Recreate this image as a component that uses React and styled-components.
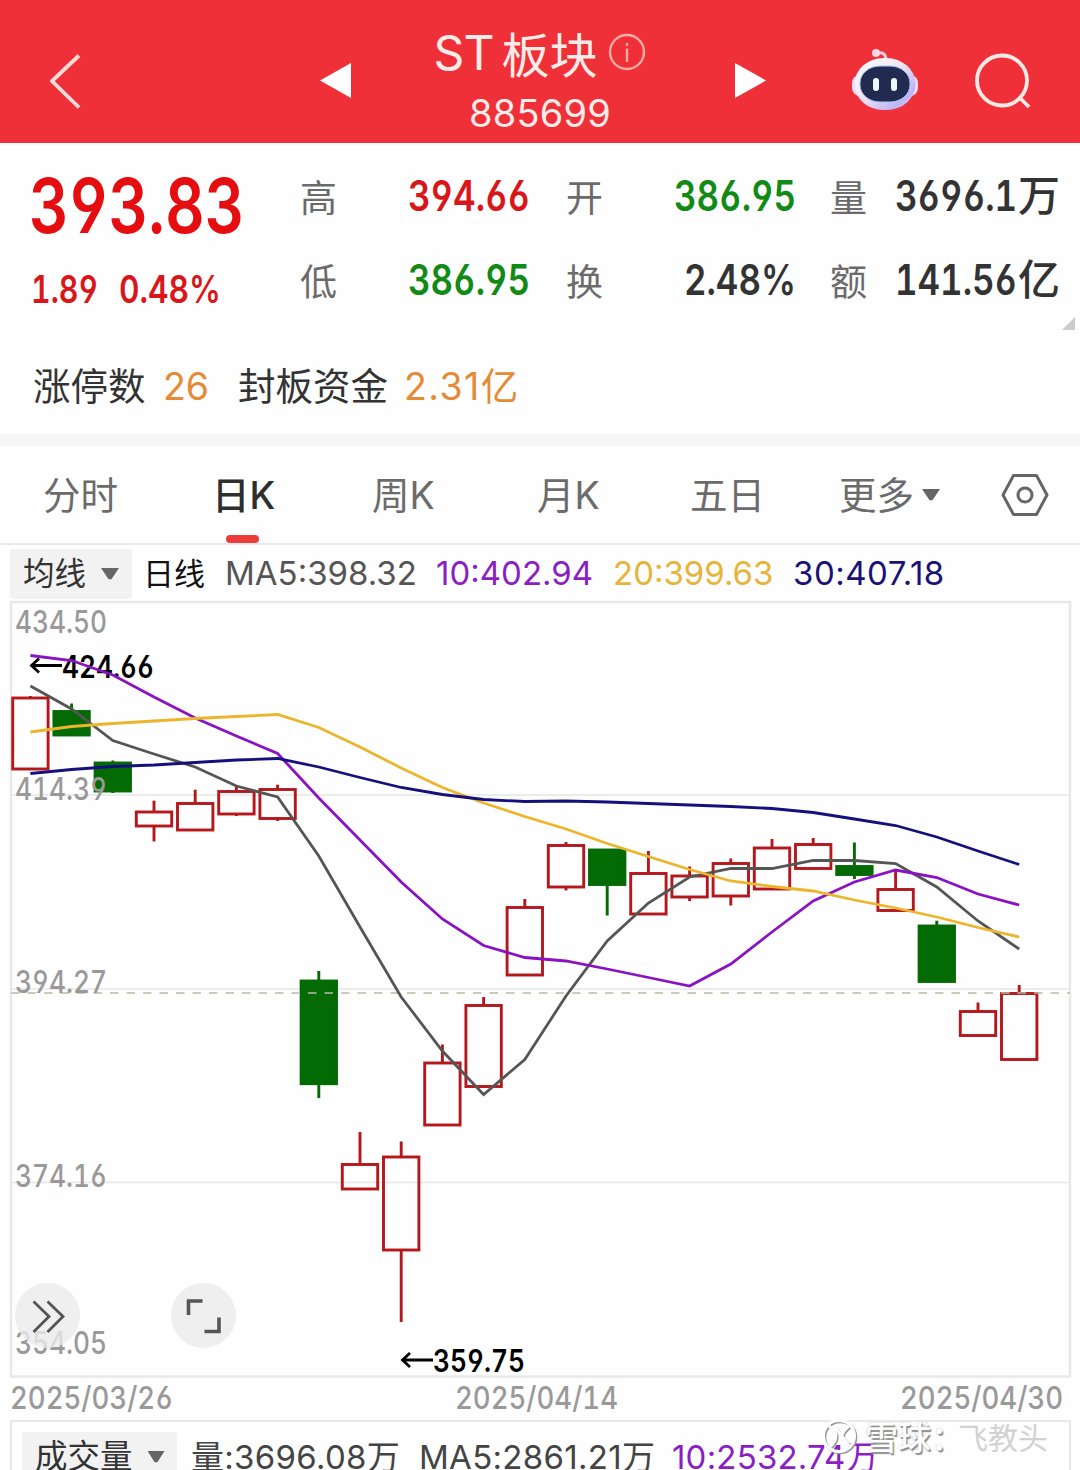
import styled, { createGlobalStyle } from 'styled-components';

const GlobalStyle = createGlobalStyle`
  * {
    box-sizing: border-box;
  }

  body {
    margin: 0;
    background: #fefefe;
    font-family: 'Inter', 'Noto Sans CJK SC', sans-serif;
    color: #333;
  }
`;

const Page = styled.div`
  position: relative;
  width: 1080px;
  height: 1470px;
  overflow: hidden;
  background: #fefefe;
  white-space: nowrap;
`;

/* Header */

const Header = styled.header`
  display: grid;
  grid-template-columns: 270px 101px 238px 192px 121px 1fr;
  height: 143px;
  padding-left: 50px;
  background: #ef3038;
`;

const BackIcon = styled.svg`
  width: 32px;
  height: 56px;
  margin-top: 54px;
`;

const StepIcon = styled.svg`
  width: 32px;
  height: 36px;
  margin-top: 63px;
  margin-left: ${(props) => props.$left || 0}px;
`;

const RobotIcon = styled.svg`
  width: 68px;
  height: 64px;
  margin-top: 48px;
`;

const SearchIcon = styled.svg`
  width: 60px;
  height: 60px;
  margin-top: 51px;
`;

const Heading = styled.div`
  display: flex;
  flex-direction: column;
  align-items: center;
  color: #ffece8;
`;

const Title = styled.h1`
  display: flex;
  align-items: center;
  height: 60px;
  margin: 22px 0 0;
  font-size: 48px;
  font-weight: 400;

  svg {
    margin-left: 11px;
  }
`;

const TitleLatin = styled.span`
  margin-right: 8px;
  letter-spacing: -1px;
`;

const Code = styled.div`
  height: 46px;
  margin-top: 8px;
  font-size: 38px;
  line-height: 46px;
  letter-spacing: 0.2px;
`;

/* Quote */

const Num = styled.span`
  display: inline-block;
  font-family: 'Inter', sans-serif;
  font-feature-settings: 'cv03', 'cv04', 'tnum';
  font-weight: ${(props) => props.$weight || 600};
  transform: scaleX(${(props) => props.$scale || 0.83});
  transform-origin: ${(props) => props.$origin || 'left'} center;
`;

const Quote = styled.section`
  display: grid;
  grid-template-columns: 271px 266px 264px 230px;
  height: 199px;
  padding: 13px 0 0 29px;
  position: relative;
`;

const PriceBlock = styled.div`
  color: #e60d10;
`;

const Price = styled.div`
  height: 100px;
  font-size: 75px;
  line-height: 100px;
`;

const Change = styled.div`
  display: flex;
  height: 66px;
  padding-left: 2px;
  font-size: 38px;
  line-height: 66px;
  color: #d9171b;
`;

const ChangeCell = styled.div`
  width: ${(props) => props.$width}px;
`;

const StatColumn = styled.div`
  display: flex;
  flex-direction: column;
  padding-right: ${(props) => props.$pad || 0}px;
`;

const Stat = styled.div`
  display: flex;
  justify-content: space-between;
  height: 83.5px;
  font-size: 42px;
  line-height: 79px;
  color: ${(props) => props.$color || '#333'};
`;

const StatLabel = styled.span`
  font-size: 37px;
  line-height: 85px;
  color: #6b6b6b;
`;

const StatValue = styled.span`
  display: flex;
  justify-content: flex-end;
`;

const Unit = styled.span`
  margin-left: 1px;
  font-family: 'Noto Sans CJK SC', sans-serif;
  font-size: 42px;
  line-height: 74px;
  font-weight: 500;
`;

const Corner = styled.span`
  position: absolute;
  right: 5px;
  bottom: 12px;
  width: 13px;
  height: 13px;
  background: #ccc;
  clip-path: polygon(100% 0, 100% 100%, 0 100%);
`;

const Limits = styled.section`
  display: flex;
  height: 92px;
  padding-left: 33px;
  font-size: 37.5px;
  line-height: 89px;
`;

const LimitCell = styled.span`
  width: ${(props) => props.$width}px;
  color: ${(props) => (props.$accent ? '#e68a35' : '#333')};
  letter-spacing: ${(props) => props.$spacing || 0}px;
`;

const Divider = styled.div`
  height: 12px;
  background: #f5f5f5;
`;

/* Tabs */

const Tabs = styled.nav`
  display: flex;
  height: 99px;
  padding-left: 43px;
  border-bottom: 2px solid #e6e9e9;
`;

const Tab = styled.div`
  display: flex;
  position: relative;
  width: ${(props) => props.$width}px;
  font-size: 37.5px;
  line-height: 99px;
  font-weight: ${(props) => (props.$active ? 500 : 400)};
  color: ${(props) => (props.$active ? '#2e2e2e' : '#6b6b6b')};
`;

const TabMark = styled.span`
  position: absolute;
  left: 14px;
  bottom: 0;
  width: 33px;
  height: 8px;
  border-radius: 4px;
  background: #ec3c39;
`;

const Caret = styled.span`
  width: ${(props) => props.$size || 18}px;
  height: 12px;
  margin: ${(props) => props.$margin || '0'};
  background: #666;
  clip-path: polygon(0 0, 100% 0, 58% 94%, 42% 94%);
`;

const Settings = styled.svg`
  width: 48px;
  height: 44px;
  margin-top: 27px;
`;

/* Indicator rows */

const Legend = styled.div`
  display: flex;
  height: 56px;
  padding: 4px 0 0 10px;
  font-size: 33px;
  line-height: 49px;
`;

const Picker = styled.div`
  display: flex;
  flex: none;
  align-items: center;
  width: ${(props) => props.$width}px;
  height: 50px;
  padding-left: 13px;
  border-radius: 3px;
  background: #f2f2f2;
  font-size: ${(props) => props.$size || 31.5}px;
  line-height: 50px;
`;

const LegendItem = styled.span`
  flex: none;
  width: ${(props) => props.$width}px;
  margin-left: ${(props) => props.$left || 0}px;
  color: ${(props) => props.$color};
  letter-spacing: ${(props) => props.$spacing || 0}px;
`;

const LegendName = styled.span`
  flex: none;
  width: 82px;
  margin-left: 11px;
  font-size: 31px;
  color: #111;
`;

/* Chart */

const ChartBox = styled.div`
  position: relative;
  height: 777px;
  margin: 0 9px 0 10px;
`;

const ChartSvg = styled.svg`
  display: block;
  width: 1061px;
  height: 777px;
  overflow: visible;

  text {
    font-family: 'Inter', sans-serif;
    font-feature-settings: 'cv03', 'cv04', 'tnum';
    font-size: 31px;
    font-weight: 500;
  }
`;

const MarkerText = styled.text`
  && {
    font-weight: 600;
  }
`;

const RoundButton = styled.div`
  position: absolute;
  left: ${(props) => props.$left}px;
  top: 682px;
  width: 65px;
  height: 65px;
  border-radius: 50%;
  background: rgba(235, 235, 235, 0.8);

  svg {
    display: block;
  }
`;

const Dates = styled.div`
  display: flex;
  justify-content: space-between;
  height: 42px;
  padding: 0 18px 0 10px;
  font-size: 31px;
  line-height: 40px;
  color: #999;
`;

const DateCell = styled.div`
  width: 162px;
`;

const Volume = styled.div`
  display: flex;
  height: 60px;
  margin: 0 9px 0 10px;
  padding: 10px 0 0 10px;
  border: 2px solid #e8e8e8;
  font-size: 33px;
  line-height: 50px;
`;

const Watermark = styled.div`
  position: absolute;
  left: 821px;
  top: 1412px;
  display: flex;
  align-items: center;
  height: 48px;
  font-size: 33px;
  font-weight: 500;
  color: #fff;
  text-shadow: 1.5px 1.5px 1px #909090, 0 0 2px #bbb;

  svg {
    margin-right: 7px;
  }
`;

const WatermarkAuthor = styled.span`
  margin-left: -6px;
  font-size: 30px;
  font-weight: 400;
  color: #d2d2d2;
  text-shadow: 1px 1px 1px #fff;
`;

const START = 30.4;
const STEP = 41.2;
const px = (i) => START + STEP * i;

// [high, body top, body bottom, low, falling]
const candles = [
  [696, 697, 770, 770],
  [703.5, 710.5, 736, 736, true],
  [760.5, 762, 792, 793, true],
  [800.7, 811, 827, 841.5],
  [789.7, 802.5, 831, 831],
  [786.7, 790.5, 815, 816],
  [784.7, 788.5, 819.5, 821],
  [971, 980, 1084.7, 1098, true],
  [1132, 1163.5, 1190, 1190],
  [1141.5, 1156, 1251, 1322],
  [1044.5, 1062, 1126, 1126],
  [997, 1004.5, 1087.5, 1088],
  [899, 906.5, 976, 976],
  [842, 844.5, 888, 890.5],
  [849, 849, 885.5, 915.5, true],
  [851, 872.5, 915, 915],
  [866.5, 875, 898, 901],
  [858.5, 862.5, 897, 905.5],
  [839, 847, 890, 890],
  [838, 843.5, 869.5, 870],
  [842.5, 865.5, 875.5, 879, true],
  [871, 888.5, 911.5, 912],
  [920.7, 925, 982.5, 982.5, true],
  [1002.5, 1010.5, 1036.5, 1037],
  [985, 992.5, 1060.5, 1061],
];

const averages = [
  {
    color: '#555',
    points: [686, 709, 740.5, 754, 767, 786, 797, 856, 927, 997, 1051, 1094.5, 1059.5, 996, 941, 903, 877, 868.5, 868.5, 860.5, 860.5, 863.5, 887, 921, 949],
  },
  {
    color: '#8a12c4',
    points: [655.5, 660.5, 675, 697, 718, 736, 753.5, 798, 840, 882, 919, 945.5, 957.5, 961, 969, 977.5, 986, 964, 932, 901, 882, 870, 877.5, 894, 905],
  },
  {
    color: '#edb52c',
    points: [732, 726.5, 723.5, 721, 718.5, 716.5, 714.5, 727.5, 747, 768, 787.5, 803, 816.5, 829, 843.5, 856.5, 869.5, 881, 886.5, 891, 900, 908, 917, 927.5, 937],
  },
  {
    color: '#14107c',
    points: [773.5, 769.5, 766.5, 765, 762.5, 760, 758.5, 767, 777.5, 787.5, 794.5, 799.5, 801.5, 801, 802, 803.5, 805, 806.5, 808.5, 812.5, 819, 825.5, 837, 851, 864.5],
  },
];

const scale = [
  ['434.50', 633],
  ['414.39', 799.5],
  ['394.27', 993],
  ['374.16', 1187],
  ['354.05', 1354],
];

const Candle = ({ x, data }) => {
  const [high, top, bottom, low, falling] = data;
  const color = falling ? '#046a04' : '#b4181c';
  return (
    <g stroke={color} strokeWidth="2.9" fill={falling ? color : 'none'}>
      {high < top && <line x1={x} x2={x} y1={high} y2={top} />}
      {low > bottom && <line x1={x} x2={x} y1={bottom} y2={low} />}
      <rect
        x={x - 17.7}
        y={top + 1}
        width="35.4"
        height={bottom - top - 2}
      />
    </g>
  );
};

const Marker = ({ x, y, value }) => (
  <g>
    <path
      d={`M${x + 32} ${y}H${x + 2}M${x + 9} ${y - 7}L${x + 1.5} ${y}L${x + 9} ${y + 7}`}
      fill="none"
      stroke="#000"
      strokeWidth="2.8"
    />
    <MarkerText x={x + 32} y={y + 12} textLength="92" lengthAdjust="spacingAndGlyphs">
      {value}
    </MarkerText>
  </g>
);

const Chart = () => (
  <ChartSvg viewBox="10 601 1061 777">
    <rect x="11" y="602" width="1059" height="774.5" fill="none" stroke="#e8e8e8" strokeWidth="2.4" />
    {[795, 989, 1182.5].map((y) => (
      <line key={y} x1="11" x2="1070" y1={y} y2={y} stroke="#e6e6e6" strokeWidth="1.5" />
    ))}
    {candles.map((data, i) => (
      <Candle key={i} x={px(i)} data={data} />
    ))}
    <line x1="11" x2="1070" y1="993" y2="993" stroke="#b9bba8" strokeWidth="1.6" strokeDasharray="8.5 8" />
    <g fill="#999">
      {scale.map(([label, y]) => (
        <text key={label} x="15" y={y} textLength="92" lengthAdjust="spacingAndGlyphs">
          {label}
        </text>
      ))}
    </g>
    <Marker x={30} y={665.5} value="424.66" />
    <Marker x={401} y={1360} value="359.75" />
    {averages.map(({ color, points }) => (
      <polyline
        key={color}
        points={points.map((y, i) => `${px(i)},${y}`).join(' ')}
        fill="none"
        stroke={color}
        strokeWidth="2.8"
      />
    ))}
  </ChartSvg>
);

const Robot = () => (
  <RobotIcon viewBox="851 48 68 64">
    <defs>
      <linearGradient id="shell" x1="0" y1="0" x2="1" y2="1">
        <stop offset="0" stopColor="#fff" />
        <stop offset="0.45" stopColor="#f1e4f4" />
        <stop offset="0.8" stopColor="#bdb4f6" />
        <stop offset="1" stopColor="#f3d9ee" />
      </linearGradient>
    </defs>
    <path d="M876 53Q886 51 886 60" fill="none" stroke="#fbd0de" strokeWidth="3" />
    <circle cx="876" cy="53" r="4" fill="#fcd9e2" />
    <rect x="852" y="75" width="66" height="21" rx="8" fill="#e9dcf8" />
    <rect x="854.5" y="58" width="61" height="52" rx="29" ry="26" fill="url(#shell)" />
    <rect x="860" y="66" width="50" height="36" rx="20" ry="17" fill="#232a50" stroke="#a9c9f7" strokeWidth="1" />
    <rect x="873" y="78" width="6" height="13" rx="3" fill="#eafaff" />
    <rect x="891" y="78" width="6" height="13" rx="3" fill="#eafaff" />
  </RobotIcon>
);

const App = () => {
  return (
    <Page>
      <GlobalStyle />
      <Header>
        <BackIcon viewBox="0 0 32 56">
          <path d="M29 1.5L2 27L29 53.5" fill="none" stroke="#ffdcd8" strokeWidth="3.8" />
        </BackIcon>
        <StepIcon viewBox="0 0 32 36">
          <path d="M0 17.5L31 0V35Z" fill="#fff" />
        </StepIcon>
        <Heading>
          <Title>
            <TitleLatin>ST</TitleLatin>
            板块
            <svg width="38" height="38" viewBox="0 0 38 38" fill="none" stroke="#ffaca6" strokeWidth="2.4">
              <circle cx="19" cy="19" r="17" />
              <path d="M19 15.5V29M19 10V13" />
            </svg>
          </Title>
          <Code>885699</Code>
        </Heading>
        <StepIcon viewBox="0 0 32 36" $left={75}>
          <path d="M32 17.5L1 0V35Z" fill="#fff" />
        </StepIcon>
        <Robot />
        <SearchIcon viewBox="972 51 60 60" fill="none" stroke="#ffe9e4" strokeWidth="3.8">
          <circle cx="1002" cy="80.5" r="25" />
          <path d="M1019 97L1029 107" />
        </SearchIcon>
      </Header>

      <Quote>
        <PriceBlock>
          <Price>
            <Num $scale={0.82}>393.83</Num>
          </Price>
          <Change>
            <ChangeCell $width={88}>
              <Num $scale={0.8}>1.89</Num>
            </ChangeCell>
            <ChangeCell $width={100}>
              <Num $scale={0.835}>0.48%</Num>
            </ChangeCell>
          </Change>
        </PriceBlock>
        <StatColumn $pad={36}>
          <Stat $color="#d9171b">
            <StatLabel>高</StatLabel>
            <Num $origin="right">394.66</Num>
          </Stat>
          <Stat $color="#128a16">
            <StatLabel>低</StatLabel>
            <Num $origin="right">386.95</Num>
          </Stat>
        </StatColumn>
        <StatColumn $pad={34}>
          <Stat $color="#128a16">
            <StatLabel>开</StatLabel>
            <Num $origin="right">386.95</Num>
          </Stat>
          <Stat>
            <StatLabel>换</StatLabel>
            <Num $origin="right">2.48%</Num>
          </Stat>
        </StatColumn>
        <StatColumn>
          <Stat>
            <StatLabel>量</StatLabel>
            <StatValue>
              <Num $origin="right">3696.1</Num>
              <Unit>万</Unit>
            </StatValue>
          </Stat>
          <Stat>
            <StatLabel>额</StatLabel>
            <StatValue>
              <Num $origin="right">141.56</Num>
              <Unit>亿</Unit>
            </StatValue>
          </Stat>
        </StatColumn>
        <Corner />
      </Quote>

      <Limits>
        <LimitCell $width={130}>涨停数</LimitCell>
        <LimitCell $width={75} $accent>26</LimitCell>
        <LimitCell $width={166}>封板资金</LimitCell>
        <LimitCell $width={120} $accent $spacing={1.4}>2.31亿</LimitCell>
      </Limits>
      <Divider />

      <Tabs>
        <Tab $width={169}>分时</Tab>
        <Tab $width={160} $active>
          日K
          <TabMark />
        </Tab>
        <Tab $width={165}>周K</Tab>
        <Tab $width={153}>月K</Tab>
        <Tab $width={149}>五日</Tab>
        <Tab $width={162}>
          更多
          <Caret $margin="43px 0 0 8px" />
        </Tab>
        <Settings viewBox="0 0 48 44" fill="none" stroke="#666" strokeWidth="3">
          <path d="M12.5 2.5H35.5L46 22L35.5 41.5H12.5L2 22Z" strokeLinejoin="round" />
          <circle cx="24" cy="22" r="7" />
        </Settings>
      </Tabs>

      <Legend>
        <Picker $width={122}>
          均线
          <Caret $margin="0 0 0 15px" />
        </Picker>
        <LegendName>日线</LegendName>
        <LegendItem $width={211} $color="#555">MA5:398.32</LegendItem>
        <LegendItem $width={177} $color="#8a1fc4">10:402.94</LegendItem>
        <LegendItem $width={180} $color="#e6b43a">20:399.63</LegendItem>
        <LegendItem $width={160} $color="#1a1276" $spacing={0.5}>30:407.18</LegendItem>
      </Legend>

      <ChartBox>
        <Chart />
        <RoundButton $left={4.5}>
          <svg width="65" height="65" viewBox="0 0 65 65" fill="none" stroke="#555" strokeWidth="2.8">
            <path d="M18.5 18.5L34 33.5L18.5 49M32.5 18.5L48 33.5L32.5 49" />
          </svg>
        </RoundButton>
        <RoundButton $left={161}>
          <svg width="65" height="65" viewBox="0 0 65 65" fill="none" stroke="#555" strokeWidth="3.6">
            <path d="M17.5 32V18H31.5M48 34.5V48.5H33.5" />
          </svg>
        </RoundButton>
      </ChartBox>

      <Dates>
        {['2025/03/26', '2025/04/14', '2025/04/30'].map((date) => (
          <DateCell key={date}>
            <Num $weight={500} $scale={0.888}>{date}</Num>
          </DateCell>
        ))}
      </Dates>

      <Volume>
        <Picker $width={155} $size={32.5}>
          成交量
          <Caret $size={17} $margin="0 0 0 15px" />
        </Picker>
        <LegendItem $width={228} $left={14} $color="#444" $spacing={0.3}>量:3696.08万</LegendItem>
        <LegendItem $width={253} $color="#444" $spacing={0.3}>MA5:2861.21万</LegendItem>
        <LegendItem $width={220} $color="#8a1fc4" $spacing={0.2}>10:2532.74万</LegendItem>
      </Volume>

      <Watermark>
        <svg width="37" height="37" viewBox="0 0 37 37" fill="none">
          <g stroke="#999" strokeWidth="3" transform="translate(1.3 1.3)">
            <circle cx="18" cy="18" r="15.5" />
            <path d="M8 8C17 14 17 21 9 29M14 9L28 28M28 8C24 11 22 14 21 17" />
          </g>
          <g stroke="#fff" strokeWidth="3">
            <circle cx="18" cy="18" r="15.5" />
            <path d="M8 8C17 14 17 21 9 29M14 9L28 28M28 8C24 11 22 14 21 17" />
          </g>
        </svg>
        雪球：
        <WatermarkAuthor>飞教头</WatermarkAuthor>
      </Watermark>
    </Page>
  );
};

export default App;
